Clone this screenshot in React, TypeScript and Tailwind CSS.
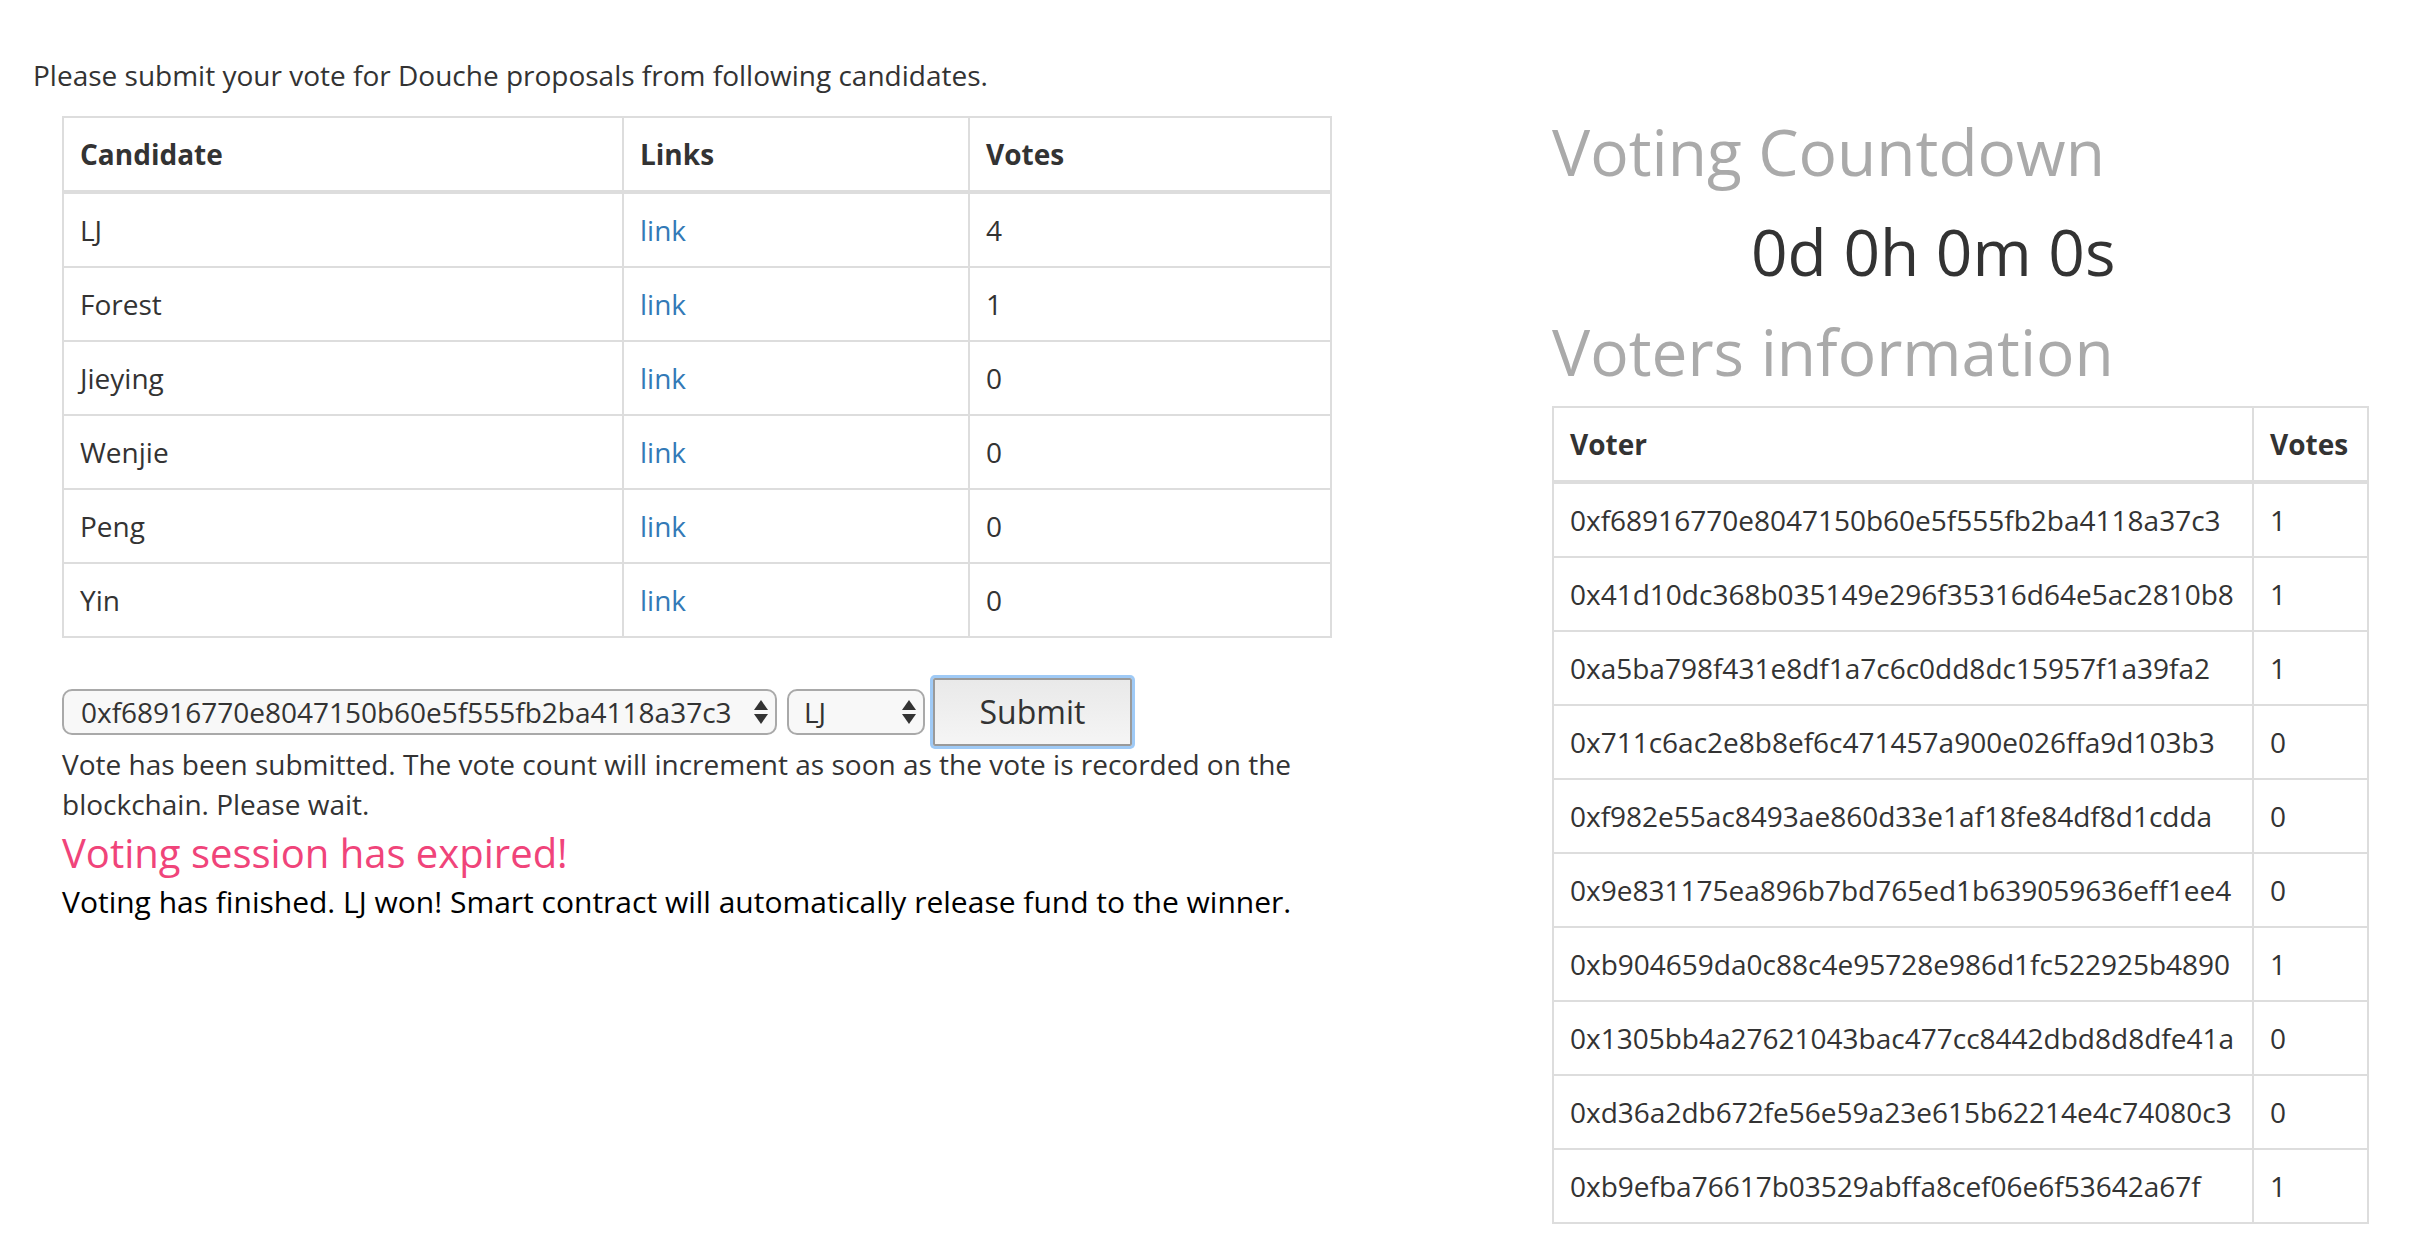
const candidates = [
  { name: "LJ", votes: 4 },
  { name: "Forest", votes: 1 },
  { name: "Jieying", votes: 0 },
  { name: "Wenjie", votes: 0 },
  { name: "Peng", votes: 0 },
  { name: "Yin", votes: 0 },
];

const voters = [
  { address: "0xf68916770e8047150b60e5f555fb2ba4118a37c3", votes: 1 },
  { address: "0x41d10dc368b035149e296f35316d64e5ac2810b8", votes: 1 },
  { address: "0xa5ba798f431e8df1a7c6c0dd8dc15957f1a39fa2", votes: 1 },
  { address: "0x711c6ac2e8b8ef6c471457a900e026ffa9d103b3", votes: 0 },
  { address: "0xf982e55ac8493ae860d33e1af18fe84df8d1cdda", votes: 0 },
  { address: "0x9e831175ea896b7bd765ed1b639059636eff1ee4", votes: 0 },
  { address: "0xb904659da0c88c4e95728e986d1fc522925b4890", votes: 1 },
  { address: "0x1305bb4a27621043bac477cc8442dbd8d8dfe41a", votes: 0 },
  { address: "0xd36a2db672fe56e59a23e615b62214e4c74080c3", votes: 0 },
  { address: "0xb9efba76617b03529abffa8cef06e6f53642a67f", votes: 1 },
];

const SelectArrows = () => (
  <svg width="14" height="24" viewBox="0 0 14 24" className="shrink-0">
    <polygon points="0,10 7,0 14,10" fill="#333" />
    <polygon points="0,14 14,14 7,24" fill="#333" />
  </svg>
);

const App = () => {
  return (
    <div className="flex min-h-[1252px] bg-white text-[28px] leading-[40px] text-[#333] font-['Open_Sans',sans-serif]">
      {/* 왼쪽: 후보 표와 투표 폼 */}
      <div className="w-[1552px] shrink-0 pl-[33px] pt-[55px]">
        <p>Please submit your vote for Douche proposals from following candidates.</p>

        <div className="ml-[29px] mt-[21px] w-[1268px]">
          <table className="w-[1268px] table-fixed border-collapse">
            <colgroup>
              <col className="w-[560px]" />
              <col className="w-[346px]" />
              <col className="w-[362px]" />
            </colgroup>
            <thead>
              <tr>
                <th className="border-2 border-b-4 border-[#ddd] p-[16px] text-left font-bold">Candidate</th>
                <th className="border-2 border-b-4 border-[#ddd] p-[16px] text-left font-bold">Links</th>
                <th className="border-2 border-b-4 border-[#ddd] p-[16px] text-left font-bold">Votes</th>
              </tr>
            </thead>
            <tbody>
              {candidates.map((c) => (
                <tr key={c.name}>
                  <td className="border-2 border-[#ddd] p-[16px]">{c.name}</td>
                  <td className="border-2 border-[#ddd] p-[16px]">
                    <a className="text-[#337ab7]">link</a>
                  </td>
                  <td className="border-2 border-[#ddd] p-[16px]">{c.votes}</td>
                </tr>
              ))}
            </tbody>
          </table>

          {/* 투표 폼 영역 */}
          <div className="mt-[40px] flex h-[68px] items-center">
            <div className="flex h-[46px] w-[715px] items-center justify-between rounded-[10px] border-2 border-[#a9a9a9] bg-[#f8f8f8] pl-[17px] pr-[7px]">
              <span>0xf68916770e8047150b60e5f555fb2ba4118a37c3</span>
              <SelectArrows />
            </div>
            <div className="ml-[10px] flex h-[46px] w-[138px] items-center justify-between rounded-[10px] border-2 border-[#a9a9a9] bg-[#f8f8f8] pl-[15px] pr-[7px]">
              <span>LJ</span>
              <SelectArrows />
            </div>
            <button className="ml-[8px] h-[68px] w-[199px] rounded-[2px] border-2 border-[#9a9a9a] bg-linear-to-b from-[#e9e9e9] to-[#f5f5f5] text-[32px] text-[#333] shadow-[0_0_0_3px_#9fcaf6]">
              Submit
            </button>
          </div>

          <p className="-mt-[2px]">
            Vote has been submitted. The vote count will increment as soon as the vote is recorded on the blockchain. Please wait.
          </p>
          <p className="text-[40px] leading-[58px] text-[#f0447a]">Voting session has expired!</p>
          <p className="text-[30px] text-black">
            Voting has finished. LJ won! Smart contract will automatically release fund to the winner.
          </p>
        </div>
      </div>

      {/* 오른쪽: 카운트다운과 투표자 정보 */}
      <div className="pt-[102px]">
        <h1 className="text-[64px] leading-[100px] font-normal text-[#aaa]">Voting Countdown</h1>
        <div className="pl-[199px] text-[64px] leading-[100px]">0d 0h 0m 0s</div>
        <h1 className="text-[64px] leading-[100px] font-normal text-[#aaa]">Voters information</h1>

        <table className="mt-[4px] w-[815px] table-fixed border-collapse">
          <colgroup>
            <col className="w-[700px]" />
            <col className="w-[115px]" />
          </colgroup>
          <thead>
            <tr>
              <th className="border-2 border-b-4 border-[#ddd] p-[16px] text-left font-bold">Voter</th>
              <th className="border-2 border-b-4 border-[#ddd] p-[16px] text-left font-bold">Votes</th>
            </tr>
          </thead>
          <tbody>
            {voters.map((v) => (
              <tr key={v.address}>
                <td className="border-2 border-[#ddd] p-[16px]">{v.address}</td>
                <td className="border-2 border-[#ddd] p-[16px]">{v.votes}</td>
              </tr>
            ))}
          </tbody>
        </table>
      </div>
    </div>
  );
};

export default App;
